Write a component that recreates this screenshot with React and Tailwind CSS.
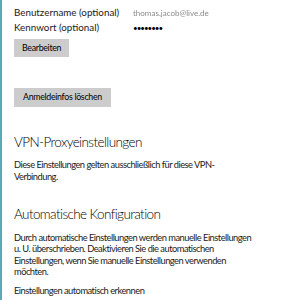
import React from 'react';

const font = { fontFamily: 'Lato, "Noto Sans", sans-serif' };

function Field({ label, children }) {
  return (
    <div className="flex h-[15px] items-center">
      <span className="w-[119px] shrink-0 whitespace-nowrap">{label}</span>
      {children}
    </div>
  );
}

function GrayButton({ children, className = '' }) {
  return (
    <button className={`whitespace-nowrap bg-[#cccccc] px-[8px] text-[8.8px] tracking-[-0.3px] text-black leading-none ${className}`}>
      {children}
    </button>
  );
}

export default function App() {
  return (
    <div
      className="flex h-[300px] w-[300px] overflow-hidden bg-white text-[9.8px] text-[#1a1a1a]"
      style={font}
    >
      <div className="w-[2px] shrink-0 bg-[#5aa9bb]" />
      <div className="flex-1 pl-[12px] pt-[5px] whitespace-nowrap">
        {/* Anmeldeinfos */}
        <Field label="Benutzername (optional)">
          <span className="text-[8px] text-[#8a8a8a] blur-[0.5px]">thomas.jacob@live.de</span>
        </Field>
        <Field label="Kennwort (optional)">
          <span className="text-[8px] tracking-[-1px] text-black">••••••••</span>
        </Field>
        <GrayButton className="mt-[4px] h-[18px]">Bearbeiten</GrayButton>
        <div>
          <GrayButton className="mt-[31px] h-[19px] px-[9px]">Anmeldeinfos löschen</GrayButton>
        </div>

        {/* VPN-Proxy */}
        <h2 className="mt-[25px] text-[13.5px] font-light leading-[20px] tracking-[-0.6px] text-black">
          VPN-Proxyeinstellungen
        </h2>
        <p className="mt-[7px] text-[9.3px] leading-[11.5px] tracking-[-0.5px]">
          Diese Einstellungen gelten ausschließlich für diese VPN-
          <br />
          Verbindung.
        </p>

        {/* Automatische Konfiguration */}
        <h2 className="mt-[22px] text-[13.5px] font-light leading-[20px] tracking-[-0.6px] text-black">
          Automatische Konfiguration
        </h2>
        <p className="mt-[8px] text-[9.3px] leading-[11.3px] tracking-[-0.5px]">
          Durch automatische Einstellungen werden manuelle Einstellungen
          <br />
          u. U. überschrieben. Deaktivieren Sie die automatischen
          <br />
          Einstellungen, wenn Sie manuelle Einstellungen verwenden
          <br />
          möchten.
        </p>
        <p className="mt-[8px] text-[9.3px] leading-[11.5px] tracking-[-0.5px]">
          Einstellungen automatisch erkennen
        </p>
      </div>
    </div>
  );
}
